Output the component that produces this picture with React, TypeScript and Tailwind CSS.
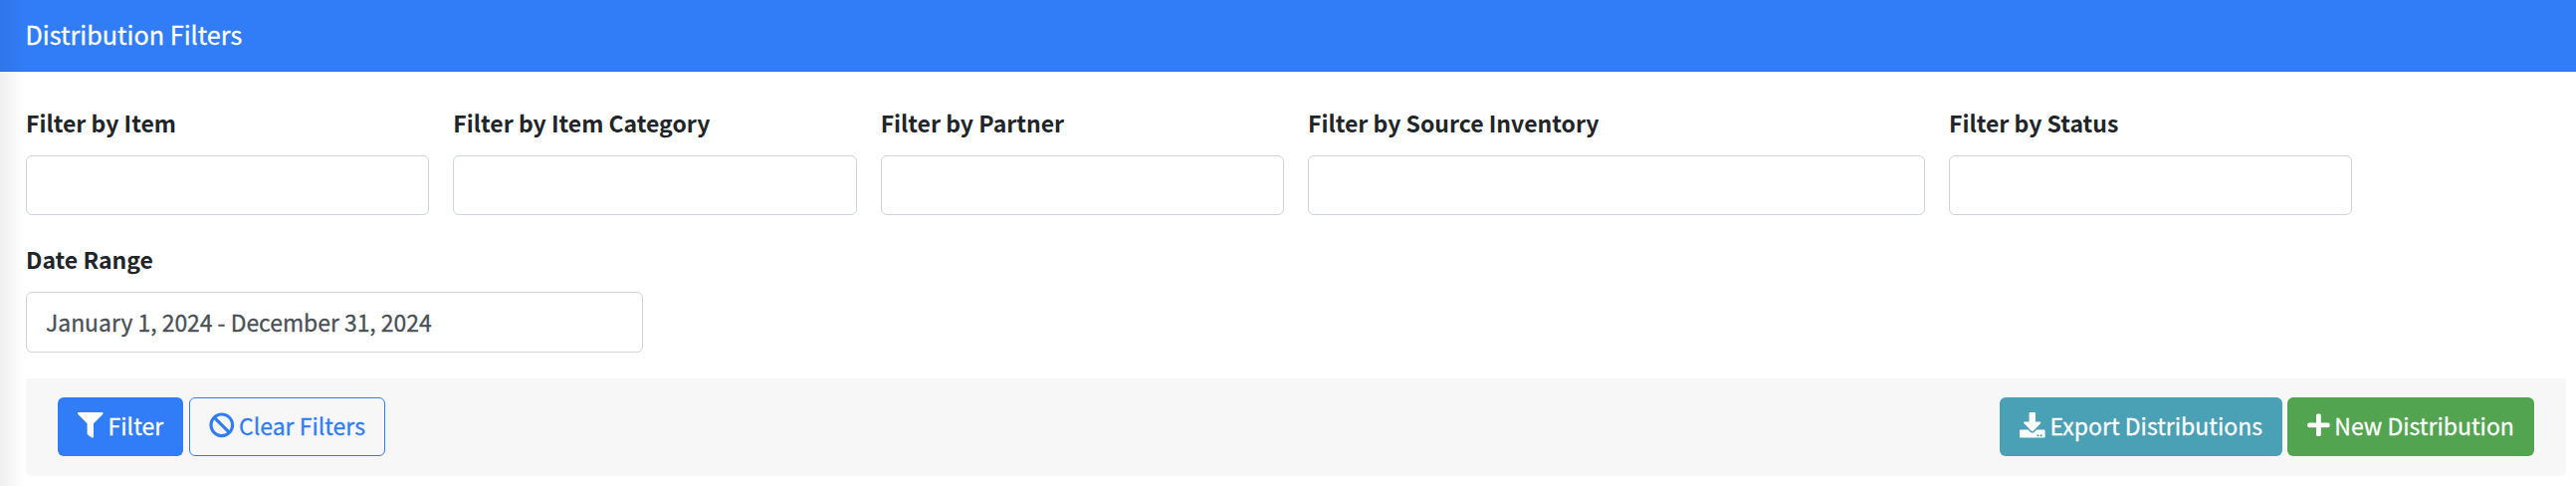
import { FaFilter, FaBan, FaDownload, FaPlus } from "react-icons/fa";

function Field({ label, span }: { label: string; span: string }) {
  return (
    <div className={span}>
      <label className="block h-[33px] whitespace-nowrap text-[23px] leading-[30px] font-bold">{label}</label>
      <input className="mt-[15px] block h-[60px] w-full rounded-[6px] border border-[#ced4da] bg-white px-5" />
    </div>
  );
}

export default function App() {
  return (
    <div className="relative h-[488px] w-full overflow-hidden bg-white font-['Noto_Sans_CJK_SC','Noto_Sans',sans-serif] text-[23px] text-[#212529]">
      <header className="flex h-[72px] items-center border-b border-[#2c6fe0] bg-[#317df7] pb-[3px] pl-[25.5px] text-white">
        <h3 className="text-[25.2px] leading-[36px] [-webkit-text-stroke:0.3px]">Distribution Filters</h3>
      </header>
      <main className="pt-9 pr-[10px] pl-[26px]">
        <div className="grid grid-cols-12 gap-x-6">
          <Field label="Filter by Item" span="col-span-2" />
          <Field label="Filter by Item Category" span="col-span-2" />
          <Field label="Filter by Partner" span="col-span-2" />
          <Field label="Filter by Source Inventory" span="col-span-3" />
          <Field label="Filter by Status" span="col-span-2" />
        </div>
        <div className="mt-[29px] grid grid-cols-12 gap-x-6">
          <div className="col-span-3">
            <label className="block h-[33px] text-[23px] leading-[31px] font-bold">Date Range</label>
            <input
              className="mt-[15px] block h-[61px] w-full rounded-[6px] border border-[#ced4da] bg-white px-[19px] pb-[2px] text-[22.9px] text-[#495057] [-webkit-text-stroke:0.3px]"
              defaultValue="January 1, 2024 - December 31, 2024"
            />
          </div>
        </div>
        <footer className="mt-[26px] flex h-[98px] items-start justify-between rounded-b-[6px] bg-[#f7f7f7] px-8 pt-[19px] [-webkit-text-stroke:0.3px]">
          <div className="flex gap-[6px]">
            <button className="flex h-[59px] w-[126px] items-center gap-[5px] rounded-[6px] bg-[#317df7] pb-[3px] pl-5 whitespace-nowrap text-white">
              <FaFilter className="size-[25.6px] shrink-0" />
              Filter
            </button>
            <button className="flex h-[59px] w-[197px] items-center gap-[4.5px] rounded-[6px] border border-[#317df7] pb-[3px] pl-[19px] whitespace-nowrap text-[#317df7]">
              <FaBan className="size-[25.6px] shrink-0" />
              Clear Filters
            </button>
          </div>
          <div className="flex gap-[5px]">
            <button className="flex h-[59px] w-[284px] items-center gap-[5px] rounded-[6px] bg-[#4aa0b5] pb-[3px] pl-5 whitespace-nowrap text-white">
              <FaDownload className="size-[25.6px] shrink-0" />
              Export Distributions
            </button>
            <button className="flex h-[59px] w-[248px] items-center gap-[4.5px] rounded-[6px] bg-[#53a451] pb-[3px] pl-5 whitespace-nowrap text-white">
              <FaPlus className="h-[25.6px] w-[22.8px] shrink-0" />
              New Distribution
            </button>
          </div>
        </footer>
      </main>
      <div className="pointer-events-none absolute inset-y-0 left-0 w-[26px] bg-linear-to-r from-black/6 to-transparent" />
    </div>
  );
}
